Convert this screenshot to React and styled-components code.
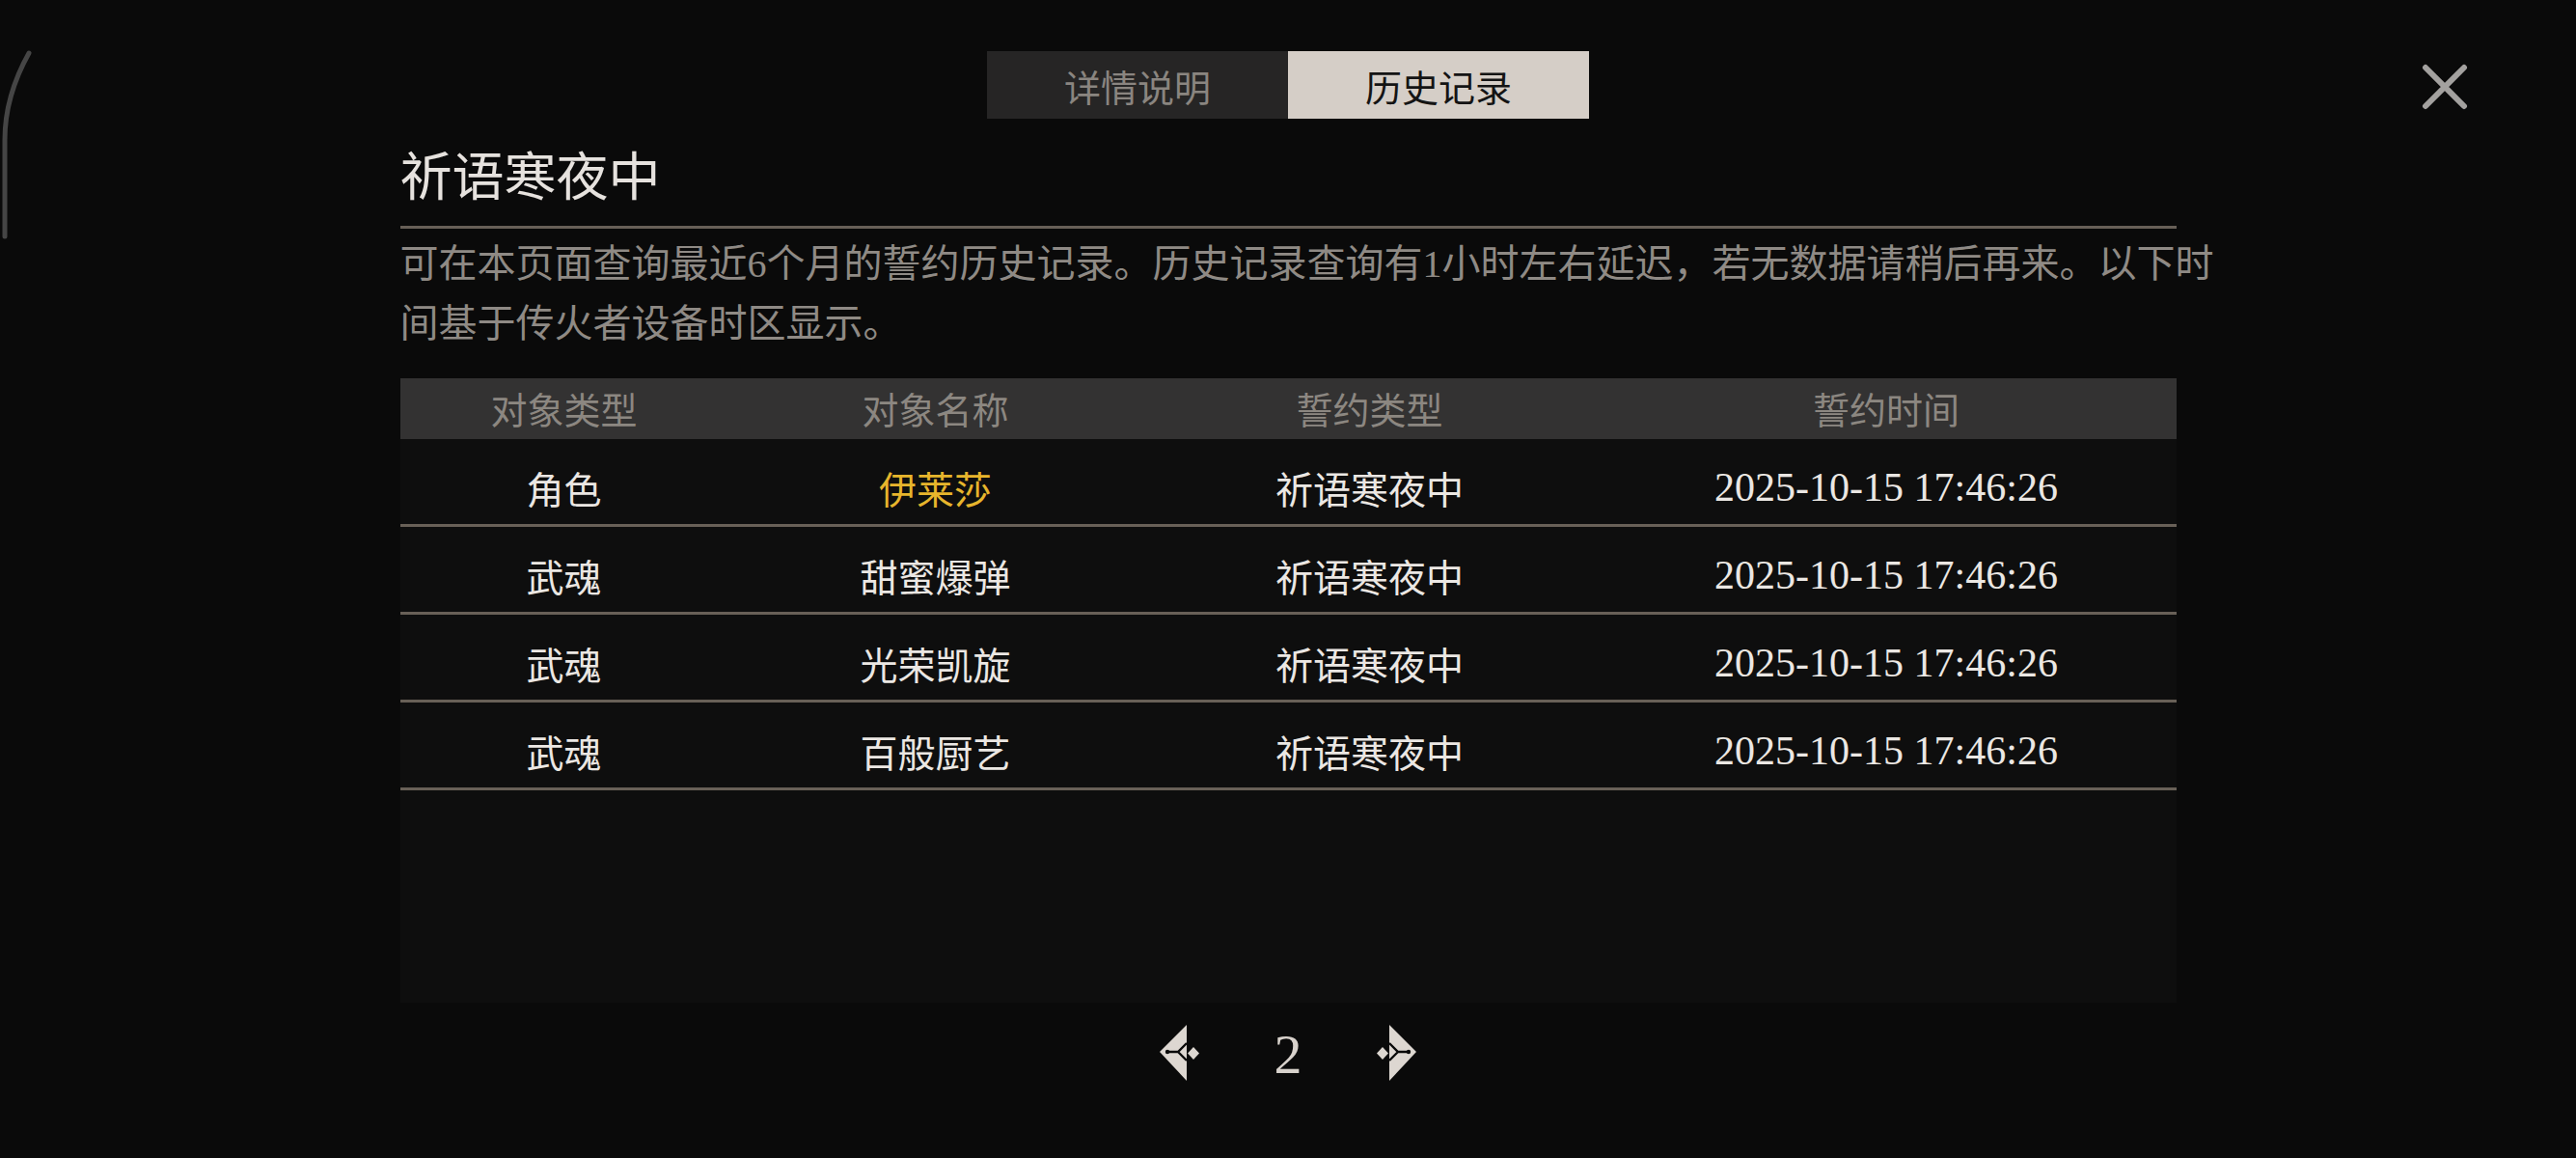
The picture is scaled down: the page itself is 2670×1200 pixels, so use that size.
import React from 'react'
import styled, { createGlobalStyle } from 'styled-components';

const rows = [
    { kind: '角色', name: '伊莱莎', rare: true, pledge: '祈语寒夜中', time: '2025-10-15 17:46:26' },
    { kind: '武魂', name: '甜蜜爆弹', pledge: '祈语寒夜中', time: '2025-10-15 17:46:26' },
    { kind: '武魂', name: '光荣凯旋', pledge: '祈语寒夜中', time: '2025-10-15 17:46:26' },
    { kind: '武魂', name: '百般厨艺', pledge: '祈语寒夜中', time: '2025-10-15 17:46:26' },
];

const ArrowIcon = ({ flip }) => (
    <svg width="80" height="75" viewBox="0 0 80 75" style={flip ? { transform: 'scaleX(-1)' } : undefined}>
        <polygon points="40,7 12,35 40,65" fill="#ddd7d1" />
        <path d="M20 35 H31 L40 26 M31 35 L40 44" stroke="#0a0a0a" strokeWidth="2.4" fill="none" />
        <circle cx="20" cy="35" r="2.2" fill="#0a0a0a" />
        <polygon points="47,30 53,36.5 47,43 41,36.5" fill="#ddd7d1" />
    </svg>
);

const App = () => {
    return (
        <>
            <GlobalStyle />
            <Page>
                <EdgeArc width="40" height="200" viewBox="0 0 40 200">
                    <path d="M30 5 C16 30 5 60 5 95 L5 195" stroke="#454545" strokeWidth="5" strokeLinecap="round" fill="none" />
                </EdgeArc>

                <CloseButton width="48" height="48" viewBox="0 0 48 48">
                    <path d="M4 4 L44 44 M44 4 L4 44" stroke="#a3a19f" strokeWidth="6" strokeLinecap="round" />
                </CloseButton>

                <Tabs>
                    <Tab>详情说明</Tab>
                    <Tab active>历史记录</Tab>
                </Tabs>

                <Content>
                    <Title>祈语寒夜中</Title>
                    <Description>
                        可在本页面查询最近6个月的誓约历史记录。历史记录查询有1小时左右延迟，若无数据请稍后再来。以下时间基于传火者设备时区显示。
                    </Description>

                    <Panel>
                        <HeaderRow>
                            <HeadCell>对象类型</HeadCell>
                            <HeadCell>对象名称</HeadCell>
                            <HeadCell>誓约类型</HeadCell>
                            <HeadCell>誓约时间</HeadCell>
                        </HeaderRow>
                        {
                            rows.map((row, i) => (
                                <Row key={i}>
                                    <Cell>{row.kind}</Cell>
                                    <Cell gold={row.rare}>{row.name}</Cell>
                                    <Cell>{row.pledge}</Cell>
                                    <TimeCell>{row.time}</TimeCell>
                                </Row>
                            ))
                        }
                    </Panel>
                </Content>

                <Pager>
                    <ArrowIcon />
                    <PageNumber>2</PageNumber>
                    <ArrowIcon flip />
                </Pager>
            </Page>
        </>
    )
}

export default App;

const GlobalStyle = createGlobalStyle`
    html, body {
        margin: 0;
        padding: 0;
        background: #0a0a0a;
        overflow: hidden;
    }
    body {
        font-family: "Liberation Serif", "Noto Sans CJK SC", serif;
    }
`;

const Page = styled.div`
    position: relative;
    width: 2670px;
    height: 1200px;
    background: #0a0a0a;
    display: flex;
    flex-direction: column;
    align-items: center;
    padding-top: 53px;
    box-sizing: border-box;
`;

const EdgeArc = styled.svg`
    position: absolute;
    left: 0;
    top: 50px;
`;

const CloseButton = styled.svg`
    position: absolute;
    left: 2510px;
    top: 66px;
    cursor: pointer;
`;

const Tabs = styled.div`
    display: flex;
    height: 70px;
`;

const Tab = styled.div`
    width: 312px;
    display: flex;
    align-items: center;
    justify-content: center;
    font-size: 38px;
    background: ${p => p.active ? '#d5cec7' : '#262525'};
    color: ${p => p.active ? '#141414' : '#8a8580'};
    cursor: pointer;
`;

const Content = styled.div`
    width: 1841px;
    margin-top: 30px;
`;

const Title = styled.h1`
    margin: 0;
    font-size: 54px;
    font-weight: 400;
    line-height: 64px;
    color: #e6e2de;
    padding-bottom: 17px;
    border-bottom: 3px solid #675f57;
`;

const Description = styled.p`
    width: 1900px;
    margin: 6px 0 0;
    font-size: 40px;
    line-height: 62px;
    color: #8f8a85;
`;

const Panel = styled.div`
    margin-top: 25px;
    height: 647px;
    background: #0e0e0e;
`;

const grid = `
    display: grid;
    grid-template-columns: 340px 430px 470px 1fr;
    align-items: center;
    text-align: center;
`;

const HeaderRow = styled.div`
    ${grid}
    height: 63px;
    padding-bottom: 3px;
    box-sizing: border-box;
    background: #333232;
`;

const HeadCell = styled.div`
    font-size: 38px;
    color: #8c8781;
`;

const Row = styled.div`
    ${grid}
    height: 91px;
    padding-top: 12px;
    box-sizing: border-box;
    border-bottom: 3px solid #686057;
`;

const Cell = styled.div`
    font-size: 39px;
    color: ${p => p.gold ? '#e7b52c' : '#ebe7e3'};
`;

const TimeCell = styled(Cell)`
    font-size: 42px;
`;

const Pager = styled.div`
    display: grid;
    grid-template-columns: 80px 130px 80px;
    align-items: center;
    justify-items: center;
    margin-top: 16px;

    svg {
        cursor: pointer;
    }
`;

const PageNumber = styled.div`
    font-size: 58px;
    color: #d8d2cc;
    line-height: 75px;
`;
